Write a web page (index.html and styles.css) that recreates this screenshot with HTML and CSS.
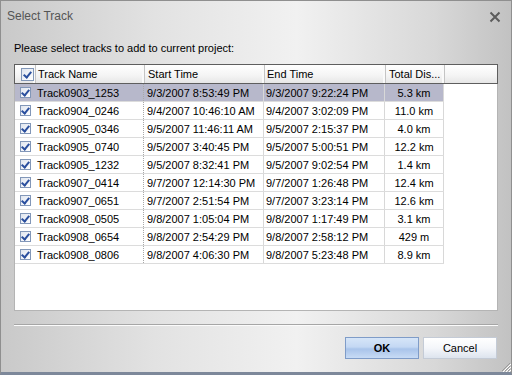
FILE: index.html
```html
<!DOCTYPE html>
<html lang="en">
  <head>
    <meta charset="UTF-8" />
    <title>Select Track</title>
    <link rel="stylesheet" href="styles.css">
  </head>
  <body>
    <div class="window">
      <div class="titlebar">
        <span class="title">Select Track</span>
        <svg class="close" width="12" height="12" viewBox="0 0 12 12">
          <path d="M1.5 1.5 L10.5 10.5 M10.5 1.5 L1.5 10.5" stroke="#5c5c5c" stroke-width="2" fill="none"/>
        </svg>
      </div>

      <div class="content">
        <div class="prompt">Please select tracks to add to current project:</div>

        <div class="listbox">
          <div class="header">
            <div class="hcell col-check"><span class="check on"></span></div>
            <div class="hcell col-name">Track Name</div>
            <div class="hcell col-start">Start Time</div>
            <div class="hcell col-end">End Time</div>
            <div class="hcell col-dist">Total Dis...</div>
            <div class="hfill"></div>
          </div>
          <div id="rows"></div>
        </div>

        <div class="separator"></div>

        <div class="buttons">
          <button class="btn btn-ok">OK</button>
          <button class="btn">Cancel</button>
        </div>
      </div>

      <svg class="grip" width="12" height="12" viewBox="0 0 12 12">
        <path d="M11 3 L3 11 M11 6 L6 11 M11 9 L9 11" stroke="#9a9a9a" stroke-width="1" fill="none"/>
        <path d="M12 4 L4 12 M12 7 L7 12 M12 10 L10 12" stroke="#ffffff" stroke-width="1" fill="none"/>
      </svg>
    </div>

    <script>
      // Track data
      const tracks = [
        ['Track0903_1253', '9/3/2007 8:53:49 PM', '9/3/2007 9:22:24 PM', '5.3 km'],
        ['Track0904_0246', '9/4/2007 10:46:10 AM', '9/4/2007 3:02:09 PM', '11.0 km'],
        ['Track0905_0346', '9/5/2007 11:46:11 AM', '9/5/2007 2:15:37 PM', '4.0 km'],
        ['Track0905_0740', '9/5/2007 3:40:45 PM', '9/5/2007 5:00:51 PM', '12.2 km'],
        ['Track0905_1232', '9/5/2007 8:32:41 PM', '9/5/2007 9:02:54 PM', '1.4 km'],
        ['Track0907_0414', '9/7/2007 12:14:30 PM', '9/7/2007 1:26:48 PM', '12.4 km'],
        ['Track0907_0651', '9/7/2007 2:51:54 PM', '9/7/2007 3:23:14 PM', '12.6 km'],
        ['Track0908_0505', '9/8/2007 1:05:04 PM', '9/8/2007 1:17:49 PM', '3.1 km'],
        ['Track0908_0654', '9/8/2007 2:54:29 PM', '9/8/2007 2:58:12 PM', '429 m'],
        ['Track0908_0806', '9/8/2007 4:06:30 PM', '9/8/2007 5:23:48 PM', '8.9 km'],
      ];

      const rows = document.getElementById('rows');
      tracks.forEach((t, i) => {
        const row = document.createElement('div');
        row.className = i === 0 ? 'row selected' : 'row';
        row.innerHTML =
          '<div class="cell col-check"><span class="check on"></span></div>' +
          `<div class="cell col-name">${t[0]}</div>` +
          `<div class="cell col-start">${t[1]}</div>` +
          `<div class="cell col-end">${t[2]}</div>` +
          `<div class="cell col-dist">${t[3]}</div>`;
        rows.appendChild(row);
      });
    </script>
  </body>
</html>
```

FILE: styles.css
```css
body {
  margin: 0;
  font-family: "Liberation Sans", Arial, sans-serif;
  font-size: 11px;
  color: #000;
}
.window {
  position: relative;
  width: 512px;
  height: 375px;
  box-sizing: border-box;
  border: 1px solid #8f8f8f;
  border-bottom: 3px solid #7d889a;
  background: linear-gradient(to right, #c9c9c9 0%, #e2e2e2 30%, #f1f1f1 58%, #d8d8d8 85%, #c2c2c2 100%);
}
.titlebar {
  height: 30px;
  display: flex;
  align-items: center;
  justify-content: space-between;
  padding: 0 10px 0 6px;
}
.title {
  font-size: 12px;
  color: #555;
}
.close {
  margin-top: 1px;
}
.content {
  padding: 0 13px 0 13px;
}
.prompt {
  line-height: 14px;
  padding: 10px 0 9px 0;
}
.listbox {
  height: 247px;
  box-sizing: border-box;
  background: #fff;
  border: 1px solid #b4b4b4;
  border-top: none;
}
.header {
  display: flex;
  height: 20px;
  box-sizing: border-box;
  border: 1px solid #5e5e5e;
  margin: 0 -1px;
  background: linear-gradient(#ffffff, #f4f4f4 60%, #e6e6e6);
}
.hcell {
  display: flex;
  align-items: center;
  box-sizing: border-box;
  border-right: 1px solid #c4c4c4;
  box-shadow: inset -2px 0 0 #fafafa;
}
.hfill {
  flex: 1;
}
.col-check {
  width: 21px;
  justify-content: center;
  padding-left: 4px;
}
.col-name {
  width: 109px;
  padding-left: 2px;
}
.col-start {
  width: 120px;
  padding-left: 3px;
}
.col-end {
  width: 121px;
  padding-left: 2px;
}
.col-dist {
  width: 59px;
  padding-left: 3px;
}
.row {
  display: flex;
  height: 18px;
  width: 429px;
  box-sizing: border-box;
  border-bottom: 1px solid #dcdcdc;
}
.row.selected {
  background: #b7b8cb;
}
.cell {
  display: flex;
  align-items: center;
  box-sizing: border-box;
  white-space: nowrap;
  overflow: hidden;
}
.cell.col-check {
  width: 20px;
  padding-left: 5px;
  justify-content: flex-start;
}
.cell.col-name {
  border-right: 1px dotted #a8a8a8;
}
.cell.col-start,
.cell.col-end,
.cell.col-dist {
  border-right: 1px solid #d8d8d8;
}
.cell.col-dist {
  justify-content: center;
  padding-left: 0;
}
.check {
  display: inline-block;
  position: relative;
  width: 11px;
  height: 11px;
  box-sizing: border-box;
  border: 1px solid #8297b8;
  background: linear-gradient(135deg, #dfe5ef, #ffffff);
}
.check.on::after {
  content: "";
  position: absolute;
  left: 2px;
  top: 0px;
  width: 3px;
  height: 6px;
  border: solid #2a4f9e;
  border-width: 0 2px 2px 0;
  transform: rotate(40deg);
}
.header .check {
  width: 13px;
  height: 13px;
}
.header .check.on::after {
  left: 3px;
  top: 1px;
}
.separator {
  margin-top: 13px;
  height: 0;
  border-top: 1px solid #a6a6a6;
  border-bottom: 1px solid #fbfbfb;
}
.buttons {
  display: flex;
  justify-content: flex-end;
  gap: 4px;
  margin-top: 11px;
  padding-right: 1px;
}
.btn {
  width: 74px;
  height: 22px;
  font-family: "Liberation Sans", Arial, sans-serif;
  font-size: 11px;
  color: #000;
  border: 1px solid #c4cbd6;
  background: linear-gradient(#ffffff, #f4f6fa 50%, #dde4ee);
  padding: 0;
}
.btn-ok {
  font-weight: bold;
  border-color: #7f9cc8;
  background: linear-gradient(#d6e5f8, #c4d8f3 45%, #a9c4ea 55%, #c8dbf5);
}
.grip {
  position: absolute;
  right: 0;
  bottom: 0;
}
```
